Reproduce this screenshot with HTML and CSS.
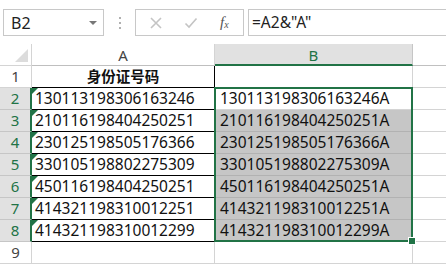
FILE: index.html
```html
<!DOCTYPE html>
<html>
<head>
<meta charset="utf-8">
<link rel="stylesheet" href="styles.css">
</head>
<body>
<div class="fbar">
  <div class="namebox"><span class="nb-text">B2</span><span class="nb-arrow"></span></div>
  <div class="dots"><i></i><i></i><i></i></div>
  <div class="btnbox">
    <svg class="ico" width="14" height="14" viewBox="0 0 14 14"><path d="M2 2L12 12M12 2L2 12" stroke="#c4c4c4" stroke-width="1.6" fill="none"/></svg>
    <svg class="ico" width="14" height="14" viewBox="0 0 14 14"><path d="M1.5 7.5L5 11L12.5 2.5" stroke="#c4c4c4" stroke-width="1.6" fill="none"/></svg>
    <span class="fx">f<sub>x</sub></span>
  </div>
  <div class="formula">=A2&amp;"A"</div>
</div>
<div class="grid">
  <div class="corner"><span class="tri"></span></div>
  <div class="ch">A</div>
  <div class="ch chsel">B</div>
  <div class="ch chrest"></div>

  <div class="rh">1</div>
  <div class="ca ctitle">身份证号码</div>
  <div class="cb"></div>
  <div class="cr"></div>

  <div class="rh rhsel">2</div>
  <div class="ca"><span class="flag"></span>130113198306163246</div>
  <div class="cb active">130113198306163246A</div>
  <div class="cr"></div>

  <div class="rh rhsel">3</div>
  <div class="ca"><span class="flag"></span>210116198404250251</div>
  <div class="cb selc">210116198404250251A</div>
  <div class="cr"></div>

  <div class="rh rhsel">4</div>
  <div class="ca"><span class="flag"></span>230125198505176366</div>
  <div class="cb selc">230125198505176366A</div>
  <div class="cr"></div>

  <div class="rh rhsel">5</div>
  <div class="ca"><span class="flag"></span>330105198802275309</div>
  <div class="cb selc">330105198802275309A</div>
  <div class="cr"></div>

  <div class="rh rhsel">6</div>
  <div class="ca"><span class="flag"></span>450116198404250251</div>
  <div class="cb selc">450116198404250251A</div>
  <div class="cr"></div>

  <div class="rh rhsel">7</div>
  <div class="ca"><span class="flag"></span>414321198310012251</div>
  <div class="cb selc">414321198310012251A</div>
  <div class="cr"></div>

  <div class="rh rhsel">8</div>
  <div class="ca"><span class="flag"></span>414321198310012299</div>
  <div class="cb selc">414321198310012299A</div>
  <div class="cr"></div>

  <div class="rh">9</div>
  <div class="ce"></div>
  <div class="ce"></div>
  <div class="cr"></div>

  <span class="sel"><span class="handle"></span></span>
</div>
</body>
</html>
```
FILE: styles.css
```css
html, body {
  margin: 0;
  padding: 0;
  background: #ffffff;
}
body {
  width: 446px;
  height: 266px;
  overflow: hidden;
  font-family: "Noto Sans", "Noto Sans CJK SC", sans-serif;
  color: #1a1a1a;
}
.fbar {
  height: 44px;
  display: flex;
  align-items: flex-start;
  box-sizing: border-box;
  padding-top: 9px;
  padding-left: 3px;
}
.namebox {
  width: 101px;
  height: 27px;
  box-sizing: border-box;
  border: 1px solid #c8c8c8;
  display: flex;
  align-items: center;
  justify-content: space-between;
  padding: 0 6px 0 7px;
}
.nb-text {
  font-size: 16px;
  color: #222;
  line-height: 1;
}
.nb-arrow {
  width: 0;
  height: 0;
  border-left: 4px solid transparent;
  border-right: 4px solid transparent;
  border-top: 4px solid #777;
}
.dots {
  width: 31px;
  height: 27px;
  display: flex;
  flex-direction: column;
  align-items: center;
  justify-content: center;
  gap: 3px;
}
.dots i {
  display: block;
  width: 2px;
  height: 2px;
  background: #b0b0b0;
}
.btnbox {
  width: 109px;
  height: 27px;
  box-sizing: border-box;
  border: 1px solid #c8c8c8;
  display: flex;
  align-items: center;
  padding-left: 13px;
}
.btnbox .ico {
  margin-right: 21px;
}
.fx {
  font-family: "Liberation Serif", serif;
  font-style: italic;
  font-size: 15px;
  color: #555;
  margin-left: 1px;
}
.fx sub {
  font-size: 10px;
  vertical-align: -1px;
}
.formula {
  margin-left: 4px;
  flex: 1;
  height: 27px;
  box-sizing: border-box;
  border: 1px solid #c8c8c8;
  border-right: none;
  font-size: 15.5px;
  line-height: 25px;
  padding-left: 3px;
  color: #222;
}
.grid {
  display: grid;
  grid-template-columns: 32px 183px 198px 1fr;
  grid-template-rows: repeat(10, 22px);
  position: relative;
}
.grid > div {
  box-sizing: border-box;
  border-right: 1px solid #d4d4d4;
  border-bottom: 1px solid #d4d4d4;
  position: relative;
  white-space: nowrap;
  overflow: hidden;
}
.corner {
  background: #fff;
}
.tri {
  position: absolute;
  right: 3px;
  bottom: 3px;
  width: 0;
  height: 0;
  border-left: 13px solid transparent;
  border-bottom: 13px solid #dcdcdc;
}
.ch {
  background: #fff;
  text-align: center;
  font-size: 15px;
  line-height: 22px;
  color: #444;
}
.grid > .ch {
  border-bottom-color: #bfbfbf;
}
.grid > .chsel {
  background: #e1e1e1;
  color: #217346;
  border-bottom: 2px solid #217346;
  border-right-color: #c6c6c6;
}
.grid > .chrest {
  background: #fff;
  border-right: none;
  border-bottom-color: #c0c0c0;
}
.rh {
  background: #fff;
  text-align: center;
  font-size: 15px;
  line-height: 21px;
  color: #444;
}
.grid > .rhsel {
  background: #e1e1e1;
  color: #217346;
  border-right: 2px solid #217346;
  border-bottom-color: #c6c6c6;
}
.ca, .cb {
  font-size: 15.5px;
  line-height: 21px;
  padding-left: 3px;
  color: #111;
}
.grid > .ca {
  border-right: 1px solid #000;
  border-bottom: 1px solid #000;
}
.grid > .ctitle {
  text-align: center;
  font-weight: bold;
  font-size: 14.5px;
  padding-left: 0;
}
.cb {
  padding-left: 5px;
}
.grid > .selc {
  background: #c6c6c6;
  border-bottom-color: #b2b2b2;
}
.grid > .cr {
  border-right: none;
}
.flag {
  position: absolute;
  left: 0;
  top: 0;
  width: 0;
  height: 0;
  border-top: 6px solid #217346;
  border-right: 6px solid transparent;
}
.sel {
  position: absolute;
  left: 214px;
  top: 43px;
  width: 199px;
  height: 155px;
  box-sizing: border-box;
  border: 2px solid #217346;
  z-index: 2;
}
.handle {
  position: absolute;
  right: -5px;
  bottom: -5px;
  width: 6px;
  height: 6px;
  background: #217346;
  border: 1px solid #fff;
}
```
